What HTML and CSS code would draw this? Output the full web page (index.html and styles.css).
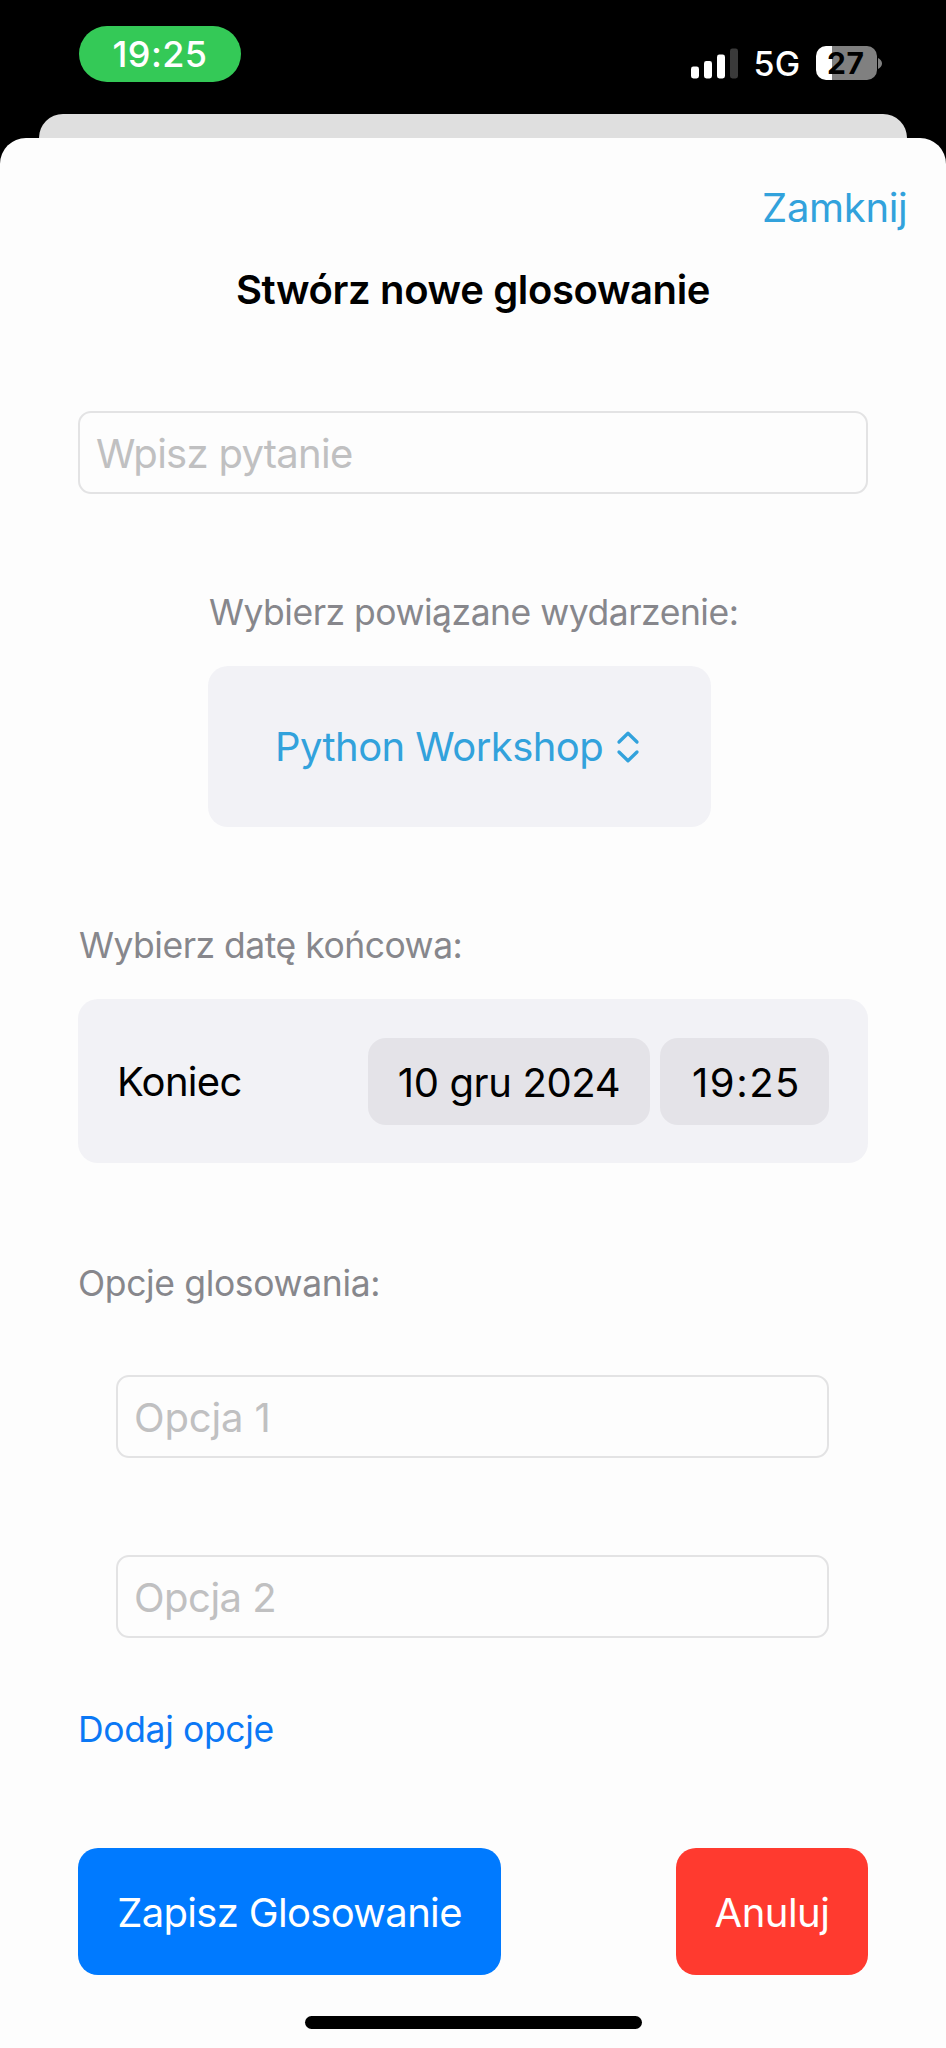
FILE: index.html
```html
<!DOCTYPE html>
<html lang="pl">
<head>
<meta charset="utf-8">
<title>Stwórz nowe glosowanie</title>
<link rel="stylesheet" href="styles.css">
</head>
<body>
<div class="screen">
  <header class="status">
    <span class="status-time">19:25</span>
    <div class="status-right">
      <svg class="signal" width="49" height="32" viewBox="0 0 49 32" aria-hidden="true">
        <rect x="1" y="18.5" width="8" height="12" rx="2.4" fill="#fff"/>
        <rect x="14" y="13" width="8" height="17.5" rx="2.4" fill="#fff"/>
        <rect x="27" y="6.5" width="8" height="24" rx="2.4" fill="#fff"/>
        <rect x="40" y="0.5" width="8" height="30" rx="2.4" fill="#3a3a3a"/>
      </svg>
      <span class="network">5G</span>
      <div class="battery">
        <span class="battery-body">27</span>
        <svg class="battery-cap" width="4" height="11" viewBox="0 0 4 11" aria-hidden="true"><path d="M0 0C2.2 1 4 3 4 5.5S2.2 10 0 11Z" fill="#808080"/></svg>
      </div>
    </div>
  </header>

  <div class="sheet-behind"></div>

  <main class="sheet">
    <div class="toolbar"><a class="close">Zamknij</a></div>
    <h1 class="title">Stwórz nowe glosowanie</h1>

    <div class="form">
      <div class="field question"><span>Wpisz pytanie</span></div>

      <section class="event">
        <h2 class="label event-label">Wybierz powiązane wydarzenie:</h2>
        <div class="picker">
          <span class="picker-text">Python Workshop</span>
          <svg class="chevrons" width="24" height="34" viewBox="0 0 24 34" fill="none" stroke="#32a2dc" stroke-width="3.3" stroke-linecap="round" stroke-linejoin="round" aria-hidden="true">
            <path d="M3 12L12 3.2L21 12"/><path d="M3 22L12 30.8L21 22"/>
          </svg>
        </div>
      </section>

      <section class="deadline">
        <h2 class="label date-label">Wybierz datę końcowa:</h2>
        <div class="date-card">
          <span class="date-name">Koniec</span>
          <div class="chips">
            <span class="chip chip-date">10 gru 2024</span>
            <span class="chip chip-time">19:25</span>
          </div>
        </div>
      </section>

      <section class="options">
        <h2 class="label options-label">Opcje glosowania:</h2>
        <div class="option-list">
          <div class="field option-one"><span>Opcja 1</span></div>
          <div class="field option-two"><span>Opcja 2</span></div>
        </div>
        <a class="add">Dodaj opcje</a>
      </section>

      <div class="actions">
        <button class="btn save">Zapisz Glosowanie</button>
        <button class="btn cancel">Anuluj</button>
      </div>
    </div>

    <div class="home-indicator"></div>
  </main>
</div>
</body>
</html>
```

FILE: styles.css
```css
* { box-sizing: border-box; }

body {
  margin: 0;
  background: #000;
  font-family: Inter, "Liberation Sans", sans-serif;
  font-size: 40px;
  line-height: 48px;
  color: #000;
}

.screen {
  width: 946px;
  height: 2048px;
  display: flex;
  flex-direction: column;
  overflow: hidden;
}

/* Status bar */
.status {
  height: 114px;
  flex: none;
  display: flex;
  justify-content: space-between;
  align-items: flex-start;
  padding: 26px 64px 0 79px;
}

.status-time {
  width: 162px;
  height: 56px;
  border-radius: 28px;
  background: #34c957;
  color: #fff;
  font-size: 36px;
  font-weight: 500;
  letter-spacing: 0.4px;
  line-height: 57px;
  text-align: center;
}

.status-right {
  display: flex;
  align-items: center;
  height: 34px;
  margin-top: 20px;
}

.signal { margin: 2px 14.5px 0 0; }

.network {
  width: 62.5px;
  color: #fff;
  font-size: 34px;
  font-weight: 500;
  letter-spacing: 0.3px;
  line-height: 34px;
  padding-top: 2px;
}

.battery {
  display: flex;
  align-items: center;
  gap: 1px;
}

.battery-body {
  width: 61px;
  height: 34px;
  border-radius: 10px;
  background: linear-gradient(90deg, #fff 16px, #808080 16px);
  color: #000;
  font-size: 30px;
  font-weight: 700;
  letter-spacing: 0.6px;
  line-height: 34px;
  padding-left: 11px;
}

/* Sheets */
.sheet-behind {
  height: 24px;
  flex: none;
  margin: 0 39px;
  border-radius: 24px 24px 0 0;
  background: #dfdfdf;
}

.sheet {
  flex: 1;
  display: flex;
  flex-direction: column;
  border-radius: 26px 26px 0 0;
  background: #fdfdfd;
}

.toolbar {
  display: flex;
  justify-content: flex-end;
  padding: 46px 38.5px 0 0;
}

.close {
  color: #32a2dc;
  letter-spacing: -0.32px;
}

.title {
  margin: 34px 0 0;
  text-align: center;
  font-size: 40px;
  font-weight: 600;
  letter-spacing: -0.37px;
  line-height: 48px;
}

/* Form */
.form {
  display: flex;
  flex-direction: column;
  margin-top: 97px;
  padding: 0 78px;
}

.field {
  display: flex;
  align-items: center;
  height: 83px;
  padding: 2px 0 0 16px;
  border: 2px solid #e3e3e4;
  border-radius: 13px;
  color: #c0c0c1;
}

.question { letter-spacing: -0.71px; }

.label {
  margin: 0;
  font-size: 35.5px;
  font-weight: 400;
  line-height: 44px;
  color: #87878c;
}

.event {
  margin: 97px 0 0 130px;
  display: flex;
  flex-direction: column;
  align-items: flex-start;
  gap: 31px;
}

.event-label {
  padding-left: 1px;
  letter-spacing: -0.5px;
}

.picker {
  display: flex;
  align-items: center;
  width: 503px;
  height: 161px;
  padding-left: 67px;
  border-radius: 20px;
  background: #f2f2f6;
  color: #32a2dc;
}

.picker-text { letter-spacing: -0.55px; }

.chevrons { margin-left: 13px; }

.deadline {
  display: flex;
  flex-direction: column;
  gap: 31px;
  margin-top: 97px;
}

.date-label {
  padding-left: 1px;
  letter-spacing: -0.5px;
}

.date-card {
  display: flex;
  align-items: center;
  justify-content: space-between;
  height: 164px;
  padding: 0 39px;
  border-radius: 20px;
  background: #f2f2f6;
}

.date-name {
  letter-spacing: -0.7px;
  padding-top: 2px;
}

.chips { display: flex; gap: 10px; padding-top: 1px; }

.chip {
  height: 87px;
  border-radius: 18px;
  background: #e4e3e8;
  line-height: 89px;
  text-align: center;
}

.chip-date { width: 282px; letter-spacing: -0.36px; }

.chip-time { width: 169px; letter-spacing: 1.5px; padding-left: 4px; }

.options {
  display: flex;
  flex-direction: column;
  align-items: flex-start;
  margin-top: 99px;
}

.options-label {
  letter-spacing: -0.36px;
}

.option-list {
  align-self: stretch;
  display: flex;
  flex-direction: column;
  gap: 97px;
  padding: 69px 39px 0 38px;
}

.option-one { letter-spacing: -0.15px; }

.option-two { letter-spacing: -0.5px; }

.add {
  margin-top: 70px;
  font-size: 35.5px;
  line-height: 44px;
  letter-spacing: -0.36px;
  color: #0b78f5;
}

.actions {
  display: flex;
  justify-content: space-between;
  margin-top: 96px;
}

.btn {
  height: 127px;
  padding: 2px 0 0;
  border: 0;
  border-radius: 20px;
  color: #fff;
  font: inherit;
  text-align: center;
}

.save {
  width: 423px;
  background: #007aff;
  letter-spacing: -0.67px;
}

.cancel {
  width: 192px;
  background: #ff3a2f;
  letter-spacing: -0.5px;
}

.home-indicator {
  width: 337px;
  height: 13px;
  margin: 41px auto 0;
  border-radius: 7px;
  background: #000;
}
```
